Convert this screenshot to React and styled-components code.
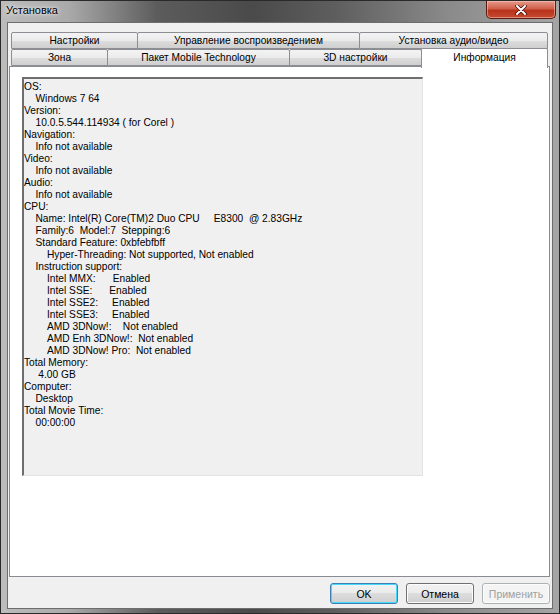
import React from 'react';
import styled, { createGlobalStyle } from 'styled-components';

const GlobalStyle = createGlobalStyle`
  html, body {
    margin: 0;
    padding: 0;
    background: #3a3a3a;
  }
  body {
    font-family: Tahoma, "Liberation Sans", Arial, sans-serif;
    font-size: 10.2px;
    color: #000;
  }
`;

const Window = styled.div`
  width: 560px;
  height: 614px;
  box-sizing: border-box;
  display: flex;
  flex-direction: column;
  border: 1px solid #2a2a2a;
  background: linear-gradient(
    90deg,
    #bcbcbc 0%,
    #aaaaaa 12%,
    #5c5c5c 28%,
    #4a4a4a 45%,
    #5e5e5e 60%,
    #8a8a8a 80%,
    #a5a5a5 100%
  );
`;

const TitleBar = styled.div`
  height: 21px;
  display: flex;
  align-items: flex-start;
  justify-content: space-between;
  padding-left: 5px;
`;

const Title = styled.span`
  font-family: "Liberation Sans", Arial, sans-serif;
  font-size: 11px;
  line-height: 19px;
  color: #000;
  text-shadow: 0 0 6px rgba(255, 255, 255, 0.9), 0 0 3px rgba(255, 255, 255, 0.8);
`;

const CloseButton = styled.div`
  width: 70px;
  height: 18px;
  margin-right: 3px;
  box-sizing: border-box;
  border: 1px solid #5a1a10;
  border-top: none;
  border-radius: 0 0 5px 5px;
  background: linear-gradient(180deg, #e59a8a 0%, #d0604a 45%, #b8321c 55%, #c44a2e 100%);
  display: flex;
  align-items: center;
  justify-content: center;
  box-shadow: inset 0 0 0 1px rgba(255, 210, 200, 0.5);
`;

const Body = styled.div`
  flex: 1;
  margin: 0 6px 4px 6px;
  border: 1px solid #6d6d6d;
  background: #f0f0f0;
  display: flex;
  flex-direction: column;
  padding: 9px 2px 0 1px;
`;

const TabStrip = styled.div`
  display: flex;
  flex-direction: column;
  padding-left: 2px;
`;

const TabRow = styled.div`
  display: flex;
  height: 17px;
  align-items: flex-end;
`;

const Tab = styled.div`
  width: ${(p) => p.$w}px;
  height: ${(p) => (p.$active ? 20 : 17)}px;
  box-sizing: border-box;
  margin-left: ${(p) => (p.$first ? 0 : -1)}px;
  margin-bottom: ${(p) => (p.$active ? -2 : 0)}px;
  position: relative;
  z-index: ${(p) => (p.$active ? 2 : 1)};
  border: 1px solid #8c8e94;
  border-bottom: ${(p) => (p.$active ? 'none' : '1px solid #8c8e94')};
  border-radius: 2px 2px 0 0;
  background: ${(p) =>
    p.$active ? '#ffffff' : 'linear-gradient(180deg, #f3f3f3 0%, #ebebeb 50%, #dddddd 51%, #cfcfcf 100%)'};
  display: flex;
  justify-content: center;
  align-items: ${(p) => (p.$active ? 'flex-start' : 'center')};
  padding-top: ${(p) => (p.$active ? 2 : 0)}px;
  font-size: 10.2px;
  line-height: 13px;
  white-space: nowrap;
`;

const Panel = styled.div`
  height: 511px;
  box-sizing: border-box;
  background: #ffffff;
  border: 1px solid #898c95;
  position: relative;
  z-index: 1;
  padding: 10px 0 0 12px;
`;

const InfoBox = styled.div`
  width: 401px;
  height: 399px;
  box-sizing: border-box;
  background: #f0f0f0;
  border-top: 2px solid #6e6e6e;
  border-left: 2px solid #6e6e6e;
  border-right: 1px solid #e3e3e3;
  border-bottom: 1px solid #e3e3e3;
  padding: 2px 0 0 0;
`;

const Line = styled.div`
  font-size: 10.2px;
  line-height: 12px;
  white-space: pre;
  padding-left: ${(p) => (p.$level || 0) * 11.5}px;
`;

const ButtonBar = styled.div`
  display: flex;
  justify-content: flex-end;
  gap: 8px;
  padding: 6px 0 0 0;
`;

const Button = styled.button`
  width: 68px;
  height: 21px;
  box-sizing: border-box;
  font-family: Tahoma, "Liberation Sans", Arial, sans-serif;
  font-size: 10.5px;
  padding: 0;
  border-radius: 3px;
  border: 1px solid ${(p) => (p.$primary ? '#3c7fb1' : p.disabled ? '#adb2b5' : '#707070')};
  color: ${(p) => (p.disabled ? '#a0a0a0' : '#000')};
  background: ${(p) =>
    p.disabled
      ? '#f4f4f4'
      : 'linear-gradient(180deg, #f2f2f2 0%, #ebebeb 49%, #dddddd 50%, #cfcfcf 100%)'};
  box-shadow: ${(p) => (p.$primary ? 'inset 0 0 0 1px #48d8fb' : 'inset 0 0 0 1px #fcfcfc')};
`;

const topTabs = [
  { label: 'Настройки', w: 127 },
  { label: 'Управление воспроизведением', w: 223 },
  { label: 'Установка аудио/видео', w: 189 },
];

const bottomTabs = [
  { label: 'Зона', w: 97 },
  { label: 'Пакет Mobile Technology', w: 183 },
  { label: '3D настройки', w: 133 },
  { label: 'Информация', w: 127, active: true },
];

const info = [
  ['OS:', 0],
  ['Windows 7 64', 1],
  ['Version:', 0],
  ['10.0.5.544.114934 ( for Corel )', 1],
  ['Navigation:', 0],
  ['Info not available', 1],
  ['Video:', 0],
  ['Info not available', 1],
  ['Audio:', 0],
  ['Info not available', 1],
  ['CPU:', 0],
  ['Name: Intel(R) Core(TM)2 Duo CPU     E8300  @ 2.83GHz', 1],
  ['Family:6  Model:7  Stepping:6', 1],
  ['Standard Feature: 0xbfebfbff', 1],
  ['Hyper-Threading: Not supported, Not enabled', 2],
  ['Instruction support:', 1],
  ['Intel MMX:      Enabled', 2],
  ['Intel SSE:      Enabled', 2],
  ['Intel SSE2:     Enabled', 2],
  ['Intel SSE3:     Enabled', 2],
  ['AMD 3DNow!:    Not enabled', 2],
  ['AMD Enh 3DNow!:  Not enabled', 2],
  ['AMD 3DNow! Pro:  Not enabled', 2],
  ['Total Memory:', 0],
  [' 4.00 GB', 1],
  ['Computer:', 0],
  ['Desktop', 1],
  ['Total Movie Time:', 0],
  ['00:00:00', 1],
];

const App = () => (
  <>
    <GlobalStyle />
    <Window>
      <TitleBar>
        <Title>Установка</Title>
        <CloseButton>
          <svg width="12" height="10" viewBox="0 0 12 10">
            <path d="M2 1 L10 9 M10 1 L2 9" stroke="#3a0a04" strokeWidth="3.4" strokeLinecap="round" />
            <path d="M2 1 L10 9 M10 1 L2 9" stroke="#ffffff" strokeWidth="2" strokeLinecap="round" />
          </svg>
        </CloseButton>
      </TitleBar>
      <Body>
        <TabStrip>
          <TabRow>
            {topTabs.map((t, i) => (
              <Tab key={t.label} $w={t.w} $first={i === 0}>
                {t.label}
              </Tab>
            ))}
          </TabRow>
          <TabRow>
            {bottomTabs.map((t, i) => (
              <Tab key={t.label} $w={t.w} $first={i === 0} $active={t.active}>
                {t.label}
              </Tab>
            ))}
          </TabRow>
        </TabStrip>
        <Panel>
          <InfoBox>
            {info.map(([text, level], i) => (
              <Line key={i} $level={level}>
                {text}
              </Line>
            ))}
          </InfoBox>
        </Panel>
        <ButtonBar>
          <Button $primary>OK</Button>
          <Button>Отмена</Button>
          <Button disabled>Применить</Button>
        </ButtonBar>
      </Body>
    </Window>
  </>
);

export default App;
